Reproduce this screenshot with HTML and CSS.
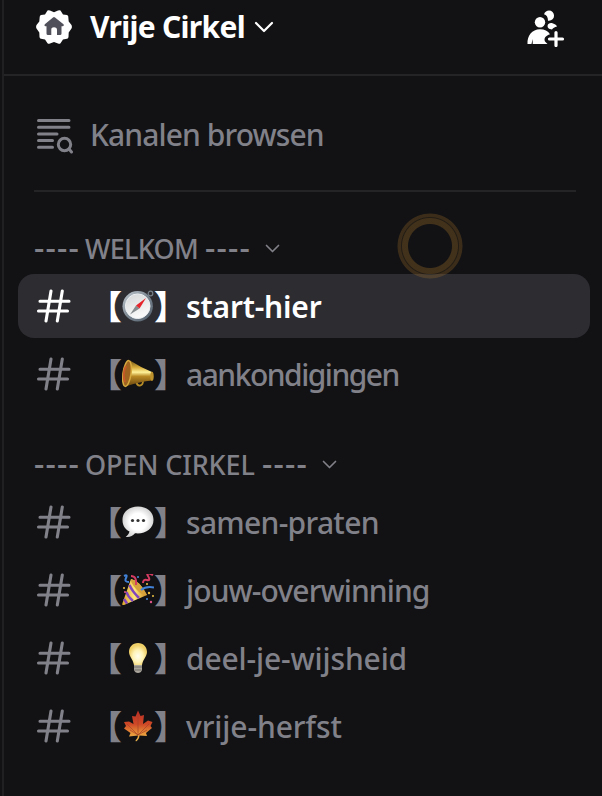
FILE: index.html
```
<!DOCTYPE html>
<html lang="nl">
<head>
    <meta charset="UTF-8">
    <meta name="viewport" content="width=device-width, initial-scale=1.0">
    <title>Vrije Cirkel</title>
    <link rel="stylesheet" href="styles.css">
</head>
<body>
    <!-- shared symbols -->
    <svg class="symbols" width="0" height="0">
        <symbol id="hash" viewBox="0 0 36 34">
            <path d="M15 2 10 32M26.300 2 21.300 32M4 12.300H33M2.500 22H31.500" fill="none" stroke="currentColor" stroke-width="3.100" stroke-linecap="round"/>
        </symbol>
        <symbol id="chevron" viewBox="0 0 20 12">
            <path d="M2 2 10 10 18 2" fill="none" stroke="currentColor" stroke-width="2.200" stroke-linecap="round" stroke-linejoin="round"/>
        </symbol>
    </svg>

    <div class="sidebar">
        <header class="header">
            <svg class="badge" viewBox="0 0 36 36">
                <path fill="#fff" d="M11.500 1.500Q12.500 .8 14 1.500L18 3.200 22 1.500Q23.500 .8 24.500 1.500L27 5.500 31 6Q32.500 6.500 32.300 8L32.700 12.500 35.500 16Q36.300 18 35.500 19.500L32.700 23.500 32.500 28Q32.300 29.500 31 29.800L27 30.500 24.500 34.300Q23.500 35.300 22 34.500L18 33 14 34.500Q12.500 35.300 11.500 34.300L9 30.500 5 29.800Q3.700 29.500 3.500 28L3.300 23.500 .5 19.500Q-.3 18 .5 16L3.300 12.500 3.700 8Q3.700 6.500 5 6L9 5.500Z"/>
                <path fill="#50505a" d="M17 8.500Q18 7.700 19 8.500L27.500 15.300Q28.500 17 26.500 17.200H25.500V24.500Q25.500 26 24 26H21V21Q21 18.300 18 18.300T15.300 21V26H12Q10.500 26 10.500 24.500V17.200H9.300Q7.700 16.800 8.800 15.300Z"/>
            </svg>
            <h1 class="server-name">Vrije Cirkel</h1>
            <svg class="header-chevron"><use href="#chevron"/></svg>
            <svg class="invite" viewBox="0 0 38 38">
                <g fill="#fff">
                    <circle cx="13" cy="13.200" r="5.200"/>
                    <path d="M17 5.300C18 2.800 19.800 1.600 22 1.600A5 5 0 0 1 22 11.700H21C21 8 19.500 6 17 5.300ZM20.500 17C21 14.500 23 13.700 25.500 14.300 28 15 30 16.400 30 17.600 27.500 18.300 26 19 25 20.500L22 19.700Q20.500 18.500 20.500 17Z"/>
                    <path d="M.5 35C0 27 5 20.300 13 20.300 17.500 20.300 21 22 23 25.300 19 26.500 16.500 29 18 32.500L20.500 35H5.700V30L4.500 35Z"/>
                </g>
                <path d="M29 23.500V36.500M22.500 30H35.500" fill="none" stroke="#fff" stroke-width="3.200" stroke-linecap="round"/>
            </svg>
        </header>

        <a class="browse">
            <svg class="browse-icon" viewBox="0 0 38 36" fill="none" stroke="currentColor" stroke-linecap="round">
                <path stroke-width="3" d="M2.500 2.500H33M2.500 9.200H33M2.500 16H21M2.500 22.500H16.500M2.500 29.200H16.500"/>
                <circle cx="28.500" cy="26.500" r="6.200" stroke-width="3"/>
                <path stroke-width="3" d="M33 31 35.500 34"/>
            </svg>
            <span class="browse-label">Kanalen browsen</span>
        </a>

        <div class="divider"></div>

        <section class="category">
            <h2 class="category-title">
                <span class="dashes">----</span>
                <span class="welkom">WELKOM</span>
                <span class="dashes">----</span>
                <svg><use href="#chevron"/></svg>
            </h2>
            <a class="channel active">
                <svg class="hash"><use href="#hash"/></svg>
                <span class="tag"><span class="open">【</span>
                    <svg class="emoji" viewBox="0 0 32 32">
                        <defs>
                            <linearGradient id="rim" x2="1" y2="1"><stop stop-color="#c3cbd1"/><stop offset=".5" stop-color="#7b8792"/><stop offset="1" stop-color="#505c68"/></linearGradient>
                            <linearGradient id="dial" y2="1" x2=".4"><stop stop-color="#d3d5d6"/><stop offset="1" stop-color="#fafafa"/></linearGradient>
                        </defs>
                        <circle cx="28.500" cy="3.500" r="2.300" fill="none" stroke="#77818a" stroke-width="1.200"/>
                        <circle cx="15.700" cy="16.200" r="15.200" fill="url(#rim)"/>
                        <circle cx="15.700" cy="16.200" r="12.300" fill="url(#dial)" stroke="#edf0f2" stroke-width="1"/>
                        <path d="M8 24.500 14 15.500 17.500 18.500Z" fill="#858a8d"/>
                        <path d="M24 8 14 15.500 17.500 18.500Z" fill="#e5252b"/>
                    </svg><span class="close">】</span></span>
                <span class="name n1">start-hier</span>
            </a>
            <a class="channel">
                <svg class="hash"><use href="#hash"/></svg>
                <span class="tag"><span class="open">【</span>
                    <svg class="emoji" viewBox="0 0 32 32">
                        <defs><linearGradient id="gold" x2="0" y2="1"><stop stop-color="#745315"/><stop offset=".28" stop-color="#d8ae3d"/><stop offset=".46" stop-color="#fff29a"/><stop offset=".62" stop-color="#b98a24"/><stop offset="1" stop-color="#6b460f"/></linearGradient></defs>
                        <path d="M14 23Q15 28 18 27.500 21 27 21 23" fill="none" stroke="#b58b27" stroke-width="1.800"/>
                        <path d="M8 2.500Q18 9 30 14V22.500Q18 23.500 5 28Z" fill="url(#gold)"/>
                        <ellipse cx="30" cy="18.300" rx="1.700" ry="4.600" fill="#bd922c"/>
                        <ellipse cx="5" cy="15.500" rx="4" ry="13" transform="rotate(8 5 15.500)" fill="#9f6420" stroke="#d6aa3e" stroke-width="1.500"/>
                        <path d="M4 8Q0 16 3 24" stroke="#c65a28" stroke-width="2" fill="none"/>
                    </svg><span class="close">】</span></span>
                <span class="name n2">aankondigingen</span>
            </a>
        </section>

        <section class="category">
            <h2 class="category-title">
                <span class="dashes">----</span>
                <span class="open-cirkel">OPEN CIRKEL</span>
                <span class="dashes">----</span>
                <svg><use href="#chevron"/></svg>
            </h2>
            <a class="channel">
                <svg class="hash"><use href="#hash"/></svg>
                <span class="tag"><span class="open">【</span>
                    <svg class="emoji" viewBox="0 0 32 32">
                        <defs><radialGradient id="bubble"><stop offset=".55" stop-color="#fff"/><stop offset="1" stop-color="#d5d5d5"/></radialGradient></defs>
                        <path d="M16 .5C7 .5 .5 6 .5 14 .5 20 3.500 23.500 7.500 25.500 7 28 5 30 3.700 31 8 31.500 11 29.500 13 27.300 23 28.500 31.500 23 31.500 14 31.500 6 25 .5 16 .5Z" fill="url(#bubble)"/>
                        <g fill="#333"><circle cx="10.500" cy="14.500" r="1.600"/><circle cx="16" cy="14.500" r="1.600"/><circle cx="21.500" cy="14.500" r="1.600"/></g>
                    </svg><span class="close">】</span></span>
                <span class="name n3">samen-praten</span>
            </a>
            <a class="channel">
                <svg class="hash"><use href="#hash"/></svg>
                <span class="tag"><span class="open">【</span>
                    <svg class="emoji" viewBox="0 0 32 32" fill="none">
                        <defs><linearGradient id="cone"><stop stop-color="#dca42c"/><stop offset=".5" stop-color="#ffe578"/><stop offset="1" stop-color="#c98b22"/></linearGradient></defs>
                        <path d="M9 5Q17 6 25 21L2 31Q-.5 31.500 .5 29Z" fill="url(#cone)"/>
                        <path d="M7.500 11Q10 17 17 24M4.500 18Q6 23 11 27M2 25 5 29.500" stroke="#8345bc" stroke-width="2.500"/>
                        <path d="M9 5Q18 7 25 21 20 22 14 15T9 5" fill="#d6a23c"/>
                        <path d="M2 2Q6 0 4 4T7 8M19 16Q24 12 32 13.500" stroke="#4282d9" stroke-width="2"/>
                        <path d="M9 2Q15 2 14 11M21 9Q21 5 25 6T26 2 31 1" stroke="#d63b62" stroke-width="2"/>
                        <g fill="#4a8ddb"><circle cx="16" cy="3" r="1"/><circle cx="25" cy="25" r="1"/></g>
                        <g fill="#edc143"><circle cx="25" cy="10" r="1"/><circle cx="27" cy="19" r="1.200"/><circle cx="31" cy="22" r="1"/><circle cx="2" cy="14" r="1"/></g>
                        <g fill="#e0558c"><circle cx="29" cy="28" r="1.200"/><circle cx="3" cy="18" r="1"/></g>
                    </svg><span class="close">】</span></span>
                <span class="name n4">jouw-overwinning</span>
            </a>
            <a class="channel">
                <svg class="hash"><use href="#hash"/></svg>
                <span class="tag"><span class="open">【</span>
                    <svg class="emoji" viewBox="0 0 32 32">
                        <defs><radialGradient id="glow" cy=".6"><stop stop-color="#fffef0"/><stop offset=".55" stop-color="#fff3b6"/><stop offset="1" stop-color="#efcf68"/></radialGradient></defs>
                        <path d="M16 1C10.500 1 7 5 7 10 7 14.500 11 17 12 23H20C21 17 25 14.500 25 10 25 5 21.500 1 16 1Z" fill="url(#glow)"/>
                        <path d="M12 23H20V28Q19 31 16 31T12 28Z" fill="#aaa69c"/>
                        <path d="M12 25H20M12.500 28H19.500" stroke="#706e6b" stroke-width="1"/>
                    </svg><span class="close">】</span></span>
                <span class="name n5">deel-je-wijsheid</span>
            </a>
            <a class="channel">
                <svg class="hash"><use href="#hash"/></svg>
                <span class="tag"><span class="open">【</span>
                    <svg class="emoji" viewBox="0 0 32 32">
                        <defs><linearGradient id="leaf" x2="0" y2="1"><stop stop-color="#b92d25"/><stop offset=".45" stop-color="#cf4a27"/><stop offset=".75" stop-color="#e9973a"/><stop offset="1" stop-color="#f1bd50"/></linearGradient></defs>
                        <path d="M16 .5 18.500 6 22 5 21 14 26 10.500 30.500 12 28.500 16 30 18 24 23 25 26 17.500 25.500Q17.500 29 14 31.500L13.500 30.500Q16 28 16 25.500L7 26.500 8.500 23 2 18.500 4 16 2 12 7 11.500 11.500 14 10 6 13.500 6.500Z" fill="url(#leaf)"/>
                        <path d="M16 5V25L5 14M16 25 27 14M16 25 8 20M16 25 25 20" fill="none" stroke="#a8442a" stroke-width=".7"/>
                    </svg><span class="close">】</span></span>
                <span class="name n6">vrije-herfst</span>
            </a>
        </section>

        <div class="click-ring"></div>
    </div>
</body>
</html>
```

FILE: styles.css
```
* {
    box-sizing: border-box;
}

body {
    margin: 0;
    height: 796px;
    overflow: hidden;
    background-color: #121214;
    color: #81818a;
    font-family: "Noto Sans", "Open Sans", sans-serif;
    padding-left: 2px;
}

.symbols {
    position: absolute;
}

svg {
    display: block;
    flex: none;
}

.sidebar {
    height: 796px;
    border-left: 2px solid #202023;
    position: relative;
}

.header {
    height: 76px;
    padding: 0 37px 20px 32px;
    border-bottom: 2px solid #242427;
    display: flex;
    align-items: center;
    color: #fff;
}

.badge {
    width: 36px;
    height: 36px;
}

.server-name {
    margin: 0 0 0 18px;
    width: 154px;
    font-size: 30px;
    font-weight: 700;
    line-height: 40px;
    letter-spacing: -0.7px;
    white-space: nowrap;
}

.header-chevron {
    width: 20px;
    height: 12px;
    margin-left: 10px;
}

.invite {
    width: 38px;
    height: 38px;
    margin-left: auto;
    margin-top: 2px;
}

.browse {
    height: 64px;
    margin: 26px 12px 0 14px;
    padding-left: 18px;
    display: flex;
    align-items: center;
}

.browse-icon {
    width: 38px;
    height: 36px;
    margin-top: 3px;
}

.browse-label {
    margin-left: 16px;
    font-size: 30px;
    font-weight: 500;
    letter-spacing: -0.9px;
}

.divider {
    height: 2px;
    margin: 24px 26px 0 30px;
    background-color: #242427;
}

.category {
    padding: 35px 12px 0 14px;
}

.category + .category {
    padding-top: 33px;
}

.category-title {
    margin: 0 0 7px;
    padding-left: 16px;
    height: 40px;
    display: flex;
    align-items: baseline;
    font-size: 27px;
    font-weight: 500;
    line-height: 40px;
    white-space: nowrap;
}

.category-title svg {
    width: 15px;
    height: 9px;
    margin-left: 10px;
    align-self: center;
    margin-top: 2px;
}

.dashes {
    width: 50px;
    font-size: 32px;
    letter-spacing: 1.2px;
}

.welkom {
    width: 121px;
    padding-left: 1px;
    letter-spacing: -0.7px;
}

.open-cirkel {
    width: 178px;
    padding-left: 1px;
    letter-spacing: -0.1px;
}

.channel {
    height: 64px;
    margin-bottom: 4px;
    padding-left: 18px;
    border-radius: 16px;
    display: flex;
    align-items: center;
    font-size: 30px;
    font-weight: 500;
    white-space: nowrap;
}

.channel.active {
    background-color: #2c2c31;
    color: #fff;
}

.hash {
    width: 36px;
    height: 34px;
}

.tag {
    width: 56px;
    height: 32px;
    margin-left: 38px;
    display: flex;
    align-items: center;
    font-family: "Noto Sans CJK JP", sans-serif;
    font-size: 33px;
    font-weight: 900;
    line-height: 32px;
}

/* only the inked half of each full-width bracket takes up room */
.open,
.close {
    width: 12px;
    padding-bottom: 3px;
    display: flex;
    flex: none;
}

.open {
    justify-content: flex-end;
}

.emoji {
    width: 32px;
    height: 32px;
}

.name {
    margin-left: 20px;
    letter-spacing: -0.9px;
}

.n1 {
    font-weight: 600;
    letter-spacing: -0.2px;
}

.n2 {
    letter-spacing: -1.5px;
}

.n3 {
    letter-spacing: -0.7px;
}

.n5 {
    letter-spacing: -0.15px;
}

.n6 {
    letter-spacing: -0.1px;
}

/* pointer highlight floating over the list */
.click-ring {
    position: absolute;
    left: 393px;
    top: 213px;
    width: 66px;
    height: 66px;
    border-radius: 50%;
    background: radial-gradient(circle, transparent 21.500px, rgba(176, 121, 42, 0.3) 22.500px, rgba(176, 121, 42, 0.3) 27.500px, rgba(100, 70, 25, 0.2) 28.500px, rgba(176, 121, 42, 0.26) 29.500px, rgba(176, 121, 42, 0.26) 32px, transparent 33px);
}
```
